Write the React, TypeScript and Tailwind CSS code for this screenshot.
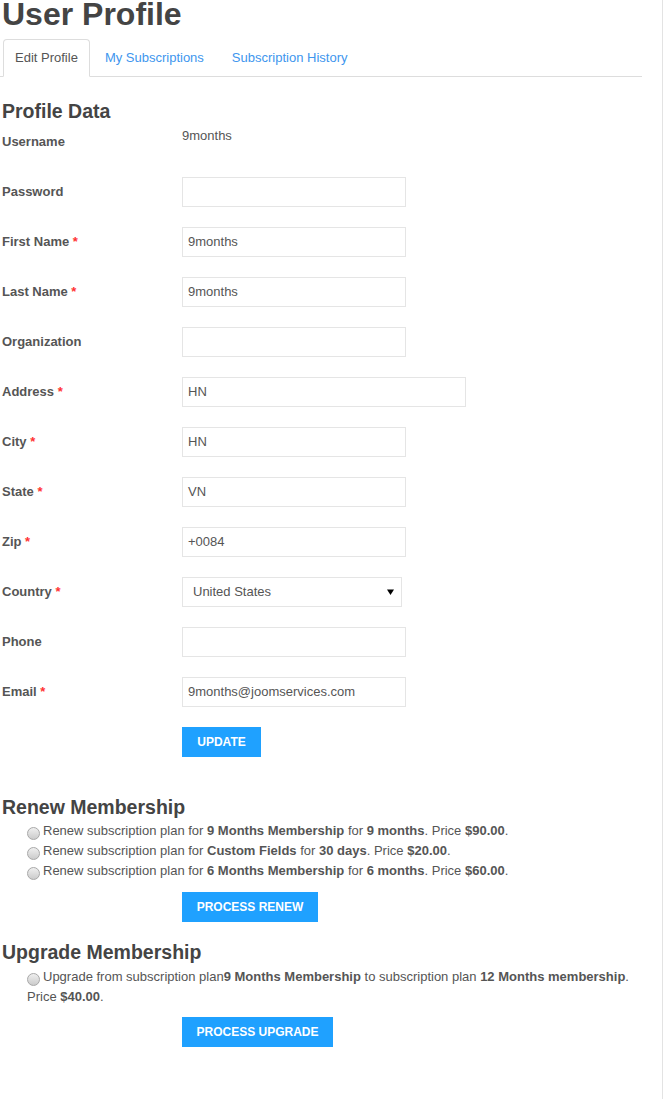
import React from "react";

type Row = { label: string; req?: boolean; kind: "text" | "input" | "select"; value?: string; wide?: boolean };

const rows: Row[] = [
  { label: "Username", kind: "text", value: "9months" },
  { label: "Password", kind: "input" },
  { label: "First Name", req: true, kind: "input", value: "9months" },
  { label: "Last Name", req: true, kind: "input", value: "9months" },
  { label: "Organization", kind: "input" },
  { label: "Address", req: true, kind: "input", value: "HN", wide: true },
  { label: "City", req: true, kind: "input", value: "HN" },
  { label: "State", req: true, kind: "input", value: "VN" },
  { label: "Zip", req: true, kind: "input", value: "+0084" },
  { label: "Country", req: true, kind: "select", value: "United States" },
  { label: "Phone", kind: "input" },
  { label: "Email", req: true, kind: "input", value: "9months@joomservices.com" },
];

function Radio() {
  return (
    <span className="mr-[3px] inline-block h-[13px] w-[13px] rounded-full border border-[#a8a8a8] bg-linear-to-b from-[#efefef] to-[#cbcbcb] align-[-5px]" />
  );
}

function Btn({ children, w }: { children: React.ReactNode; w: string }) {
  return (
    <div className={`ml-[182px] flex h-[30px] items-center justify-center bg-[#1fa1ff] text-[12px] font-bold uppercase text-white ${w}`}>
      {children}
    </div>
  );
}

export default function App() {
  return (
    <div className="min-h-[1101px] w-[663px] border-r border-[#e3e3e3] bg-white font-['Liberation_Sans',Arial,sans-serif] text-[13px] text-[#555]">
      <div className="w-[642px]">
        <h1 className="-mt-[2px] ml-[2px] text-[32px] font-bold leading-[32px] text-[#444]">User Profile</h1>
        <ul className="mt-[9px] flex border-b border-[#ddd] pl-[3px]">
          <li className="-mb-px mr-[2px]">
            <span className="block rounded-t-[4px] border border-[#ddd] border-b-transparent bg-white px-[11px] py-[9px] leading-[18px] text-[#555]">
              Edit Profile
            </span>
          </li>
          <li className="-mb-px mr-[2px]">
            <span className="block rounded-t-[4px] border border-transparent px-[12px] py-[9px] leading-[18px] text-[#4096ee]">
              My Subscriptions
            </span>
          </li>
          <li className="-mb-px mr-[2px]">
            <span className="block rounded-t-[4px] border border-transparent px-[12px] py-[9px] leading-[18px] text-[#4096ee]">
              Subscription History
            </span>
          </li>
        </ul>

        <h2 className="mb-[5px] ml-[2px] mt-[23px] text-[19.5px] font-bold leading-[22px] text-[#444]">Profile Data</h2>

        {rows.map((r) => (
          <div key={r.label} className="mb-[20px] flex h-[30px]">
            <div className="w-[182px] self-center pl-[2px] font-bold leading-[18px]">
              {r.label}
              {r.req && <span className="text-[#f33]"> *</span>}
            </div>
            {r.kind === "text" && <div className="self-start leading-[18px]">{r.value}</div>}
            {r.kind === "input" && (
              <div
                className={`flex h-[30px] items-center border border-[#e5e5e5] px-[5px] leading-[18px] ${
                  r.wide ? "w-[284px]" : "w-[224px]"
                }`}
              >
                {r.value}
              </div>
            )}
            {r.kind === "select" && (
              <div className="flex h-[30px] w-[220px] items-center justify-between border border-[#e5e5e5] pl-[10px] pr-[7px] leading-[18px]">
                <span>{r.value}</span>
                <svg width="7" height="6" viewBox="0 0 7 6">
                  <path d="M0 0.5 H7 L3.5 6 Z" fill="#000" />
                </svg>
              </div>
            )}
          </div>
        ))}

        <Btn w="w-[79px]">Update</Btn>

        <h2 className="ml-[2px] mt-[39px] text-[19.5px] font-bold leading-[22px] text-[#444]">Renew Membership</h2>
        <div className="mt-[3px] pl-[27px] leading-[20px]">
          <div>
            <Radio />
            Renew subscription plan for <b>9 Months Membership</b> for <b>9 months</b>. Price <b>$90.00</b>.
          </div>
          <div>
            <Radio />
            Renew subscription plan for <b>Custom Fields</b> for <b>30 days</b>. Price <b>$20.00</b>.
          </div>
          <div>
            <Radio />
            Renew subscription plan for <b>6 Months Membership</b> for <b>6 months</b>. Price <b>$60.00</b>.
          </div>
        </div>
        <div className="mt-[11px]">
          <Btn w="w-[136px]">Process Renew</Btn>
        </div>

        <h2 className="ml-[2px] mt-[19px] text-[19.5px] font-bold leading-[22px] text-[#444]">Upgrade Membership</h2>
        <p className="mt-[4px] pl-[27px] leading-[20px]">
          <Radio />
          Upgrade from subscription plan<b>9 Months Membership</b> to subscription plan <b>12 Months membership</b>. Price{" "}
          <b>$40.00</b>.
        </p>
        <div className="mt-[10px]">
          <Btn w="w-[151px]">Process Upgrade</Btn>
        </div>
      </div>
    </div>
  );
}
